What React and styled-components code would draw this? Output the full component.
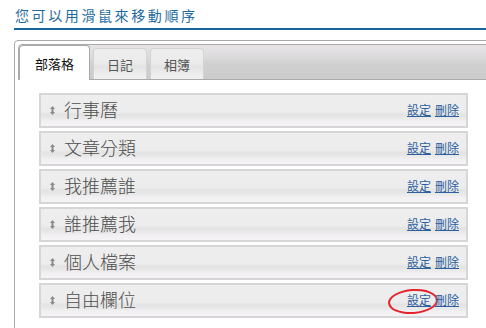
import React from 'react';
import styled, { createGlobalStyle } from 'styled-components';

const tabs = ['部落格', '日記', '相簿'];
const modules = ['行事曆', '文章分類', '我推薦誰', '誰推薦我', '個人檔案', '自由欄位'];

const GlobalStyle = createGlobalStyle`
  body {
    margin: 0;
    background: #ffffff;
    overflow: hidden;
    font-family: "Liberation Sans", "Noto Sans CJK TC", sans-serif;
  }
`;

// the panel runs on past the right and bottom edges, clip it here
const Page = styled.div`
  width: 100vw;
  height: 100vh;
  overflow: hidden;
`;

const Heading = styled.h2`
  margin: 0 0 0 14px;
  padding: 6px 0 2px 1px;
  font-size: 14px;
  font-weight: normal;
  line-height: 20px;
  letter-spacing: 2.6px;
  color: #1f6b9e;
  border-bottom: 2px solid #15679b;
`;

const Panel = styled.div`
  width: 520px;
  height: 320px;
  margin: 10px 0 0 14px;
  padding: 3px;
  border: 1px solid #aaaaaa;
  border-radius: 4px;
  background: #ffffff;
`;

const TabBar = styled.div`
  display: flex;
  align-items: flex-end;
  gap: 3px;
  height: 34px;
  border: 1px solid #aaaaaa;
  border-radius: 4px 4px 0 0;
  background: linear-gradient(#e8e4e8 0%, #dcdadc 35%, #cfcfcf 60%, #cccccc 100%);
`;

const Tab = styled.div`
  display: flex;
  align-items: center;
  justify-content: center;
  box-sizing: border-box;
  height: ${(props) => (props.$active ? '35px' : '31px')};
  margin-bottom: ${(props) => (props.$active ? '-1px' : '0')};
  padding: ${(props) => (props.$active ? '0 15px' : '0 13px')};
  border: 1px solid ${(props) => (props.$active ? '#aaaaaa' : '#d3d3d3')};
  border-bottom: none;
  border-radius: 4px 4px 0 0;
  background: ${(props) =>
    props.$active
      ? '#ffffff'
      : 'linear-gradient(#eeeeee 0%, #ebebeb 45%, #e3e3e3 60%, #eeeeee 85%, #f1f1f1 100%)'};
  font-size: 13px;
  color: ${(props) => (props.$active ? '#111111' : '#555555')};
`;

const Content = styled.div`
  display: flex;
  flex-direction: column;
  gap: 3px;
  padding: 13px 0 0 21px;
`;

const Row = styled.div`
  display: flex;
  align-items: center;
  box-sizing: border-box;
  width: 429px;
  height: 35px;
  padding: 0 7px 0 8px;
  border: 2px solid #d6d6d6;
  background: linear-gradient(
    #eeeeee 0%,
    #ececec 55%,
    #e3e3e3 62%,
    #e6e6e6 70%,
    #f2f0f2 85%,
    #f5f3f5 100%
  );
`;

const Grip = styled.svg`
  flex: none;
  margin: 0 9px 0 1px;
`;

const Label = styled.span`
  flex: 1;
  font-size: 18px;
  font-weight: 300;
  line-height: 22px;
  color: #4e4e4e;
`;

const Actions = styled.div`
  display: flex;
  gap: 4px;
`;

const ActionLink = styled.a`
  position: relative;
  font-size: 12px;
  line-height: 16px;
  color: #2d5f9f;
  text-decoration: underline;
  cursor: pointer;

  ${(props) =>
    props.$circled &&
    `
    &::after {
      content: '';
      position: absolute;
      left: -19px;
      top: -4px;
      width: 50px;
      height: 25px;
      box-sizing: border-box;
      border: 2px solid #e3242b;
      border-radius: 50%;
      transform: rotate(-4deg);
    }
  `}
`;

function GripIcon() {
  return (
    <Grip width="5" height="9" viewBox="0 0 5 9">
      <path d="M2.5 0 L5 3 L0 3 Z M1.5 3 H3.5 V6 H1.5 Z M0 6 L5 6 L2.5 9 Z" fill="#8a8a8a" />
    </Grip>
  );
}

export default function App() {
  return (
    <Page>
      <GlobalStyle />
      <Heading>您可以用滑鼠來移動順序</Heading>
      <Panel>
        <TabBar>
          {tabs.map((tab, i) => (
            <Tab key={tab} $active={i === 0}>
              {tab}
            </Tab>
          ))}
        </TabBar>
        <Content>
          {modules.map((name, i) => (
            <Row key={name}>
              <GripIcon />
              <Label>{name}</Label>
              <Actions>
                <ActionLink $circled={i === modules.length - 1}>設定</ActionLink>
                <ActionLink>刪除</ActionLink>
              </Actions>
            </Row>
          ))}
        </Content>
      </Panel>
    </Page>
  );
}
